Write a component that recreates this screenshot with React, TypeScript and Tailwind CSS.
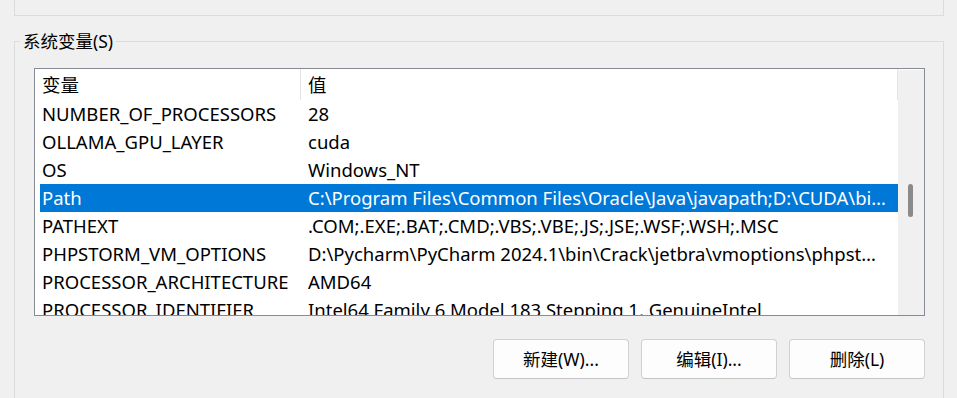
const rows = [
  ["NUMBER_OF_PROCESSORS", "28"],
  ["OLLAMA_GPU_LAYER", "cuda"],
  ["OS", "Windows_NT"],
  ["Path", "C:\\Program Files\\Common Files\\Oracle\\Java\\javapath;D:\\CUDA\\bin;D:\\CUDA\\libnvvp;C:\\Windows\\system32"],
  ["PATHEXT", ".COM;.EXE;.BAT;.CMD;.VBS;.VBE;.JS;.JSE;.WSF;.WSH;.MSC"],
  ["PHPSTORM_VM_OPTIONS", "D:\\Pycharm\\PyCharm 2024.1\\bin\\Crack\\jetbra\\vmoptions\\phpstorm64.exe.vmoptions"],
  ["PROCESSOR_ARCHITECTURE", "AMD64"],
  ["PROCESSOR_IDENTIFIER", "Intel64 Family 6 Model 183 Stepping 1, GenuineIntel"],
];

function Button({ label }: { label: string }) {
  return (
    <button className="w-[136px] h-[40px] rounded-[4px] border border-[#d0d0d0] border-b-[#c4c4c4] bg-[#fdfdfd] text-[17.5px] text-black">
      {label}
    </button>
  );
}

export default function App() {
  const selected = 3;

  return (
    <div className="w-[957px] h-[398px] overflow-hidden bg-[#f0f0f0] text-black font-['Noto_Sans','Noto_Sans_CJK_SC',sans-serif] text-[18.5px]">
      <div className="ml-[14px] w-[930px] h-[16px] border-x border-b border-[#dcdcdc]" />

      <div className="relative ml-[14px] mt-[25px] w-[930px] h-[400px] border-x border-t border-[#dcdcdc] pl-[19px] pt-[26px]">
        <span className="absolute left-[5px] -top-[13px] bg-[#f0f0f0] px-[3px] leading-[24px] text-[17.5px]">
          系统变量(S)
        </span>

        <div className="flex w-[891px] h-[248px] border border-[#868b94] bg-white">
          <div className="w-[863px] flex flex-col overflow-hidden">
            <div className="flex h-[31px] shrink-0 items-center">
              <div className="w-[266px] h-full pl-[7px] flex items-center border-r border-[#e5e5e5]">
                变量
              </div>
              <div className="flex-1 h-full pl-[7px] flex items-center border-r border-[#e5e5e5]">
                值
              </div>
            </div>
            {rows.map(([name, value], i) => (
              <div
                key={name}
                className={`flex ml-[5px] h-[28px] shrink-0 items-center whitespace-nowrap ${
                  i === selected ? "bg-[#0078d7] text-white" : ""
                }`}
              >
                <div className="w-[261px] pl-[2px] overflow-hidden">{name}</div>
                <div className="w-[590px] pl-[7px] pr-[4px] truncate">{value}</div>
              </div>
            ))}
          </div>
          <div className="w-[26px] mt-[1px] bg-[#f0f0f0] pt-[114px] pl-[10px]">
            <div className="w-[5px] h-[33px] rounded-full bg-[#8a8a8a]" />
          </div>
        </div>

        <div className="flex w-[891px] justify-end gap-[12px] mt-[23px]">
          <Button label="新建(W)..." />
          <Button label="编辑(I)..." />
          <Button label="删除(L)" />
        </div>
      </div>
    </div>
  );
}
